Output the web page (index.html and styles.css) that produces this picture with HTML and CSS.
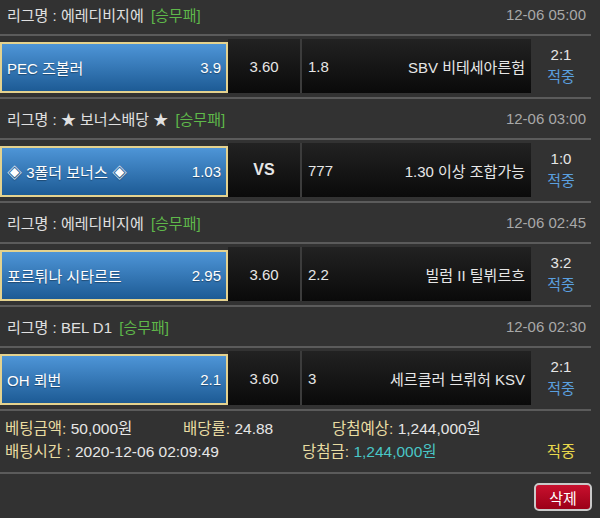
FILE: index.html
```html
<!DOCTYPE html>
<html lang="ko">
<head>
  <meta charset="UTF-8">
  <meta name="viewport" content="width=device-width, initial-scale=1.0">
  <title>배팅내역</title>
  <link rel="stylesheet" href="styles.css">
</head>
<body>

<div class="wrap">

  <!-- 경기 1 -->
  <div class="match">
    <div class="league">
      <span>리그명 : 에레디비지에 <em class="type">[승무패]</em></span>
      <span class="time">12-06 05:00</span>
    </div>
    <div class="game">
      <div class="pick"><span>PEC 즈볼러</span><span>3.9</span></div>
      <div class="draw">3.60</div>
      <div class="away"><span>1.8</span><span>SBV 비테세아른험</span></div>
      <div class="result"><span>2:1</span><span class="hit">적중</span></div>
    </div>
  </div>

  <!-- 경기 2 -->
  <div class="match">
    <div class="league">
      <span>리그명 : ★ 보너스배당 ★ <em class="type">[승무패]</em></span>
      <span class="time">12-06 03:00</span>
    </div>
    <div class="game">
      <div class="pick"><span>◈ 3폴더 보너스 ◈</span><span>1.03</span></div>
      <div class="draw vs">VS</div>
      <div class="away"><span>777</span><span>1.30 이상 조합가능</span></div>
      <div class="result"><span>1:0</span><span class="hit">적중</span></div>
    </div>
  </div>

  <!-- 경기 3 -->
  <div class="match">
    <div class="league">
      <span>리그명 : 에레디비지에 <em class="type">[승무패]</em></span>
      <span class="time">12-06 02:45</span>
    </div>
    <div class="game">
      <div class="pick"><span>포르튀나 시타르트</span><span>2.95</span></div>
      <div class="draw">3.60</div>
      <div class="away"><span>2.2</span><span>빌럼 II 틸뷔르흐</span></div>
      <div class="result"><span>3:2</span><span class="hit">적중</span></div>
    </div>
  </div>

  <!-- 경기 4 -->
  <div class="match">
    <div class="league">
      <span>리그명 : BEL D1 <em class="type">[승무패]</em></span>
      <span class="time">12-06 02:30</span>
    </div>
    <div class="game">
      <div class="pick"><span>OH 뢰번</span><span>2.1</span></div>
      <div class="draw">3.60</div>
      <div class="away"><span>3</span><span>세르클러 브뤼허 KSV</span></div>
      <div class="result"><span>2:1</span><span class="hit">적중</span></div>
    </div>
  </div>

  <!-- 합계 -->
  <div class="summary">
    <div class="line first">
      <span><b>베팅금액:</b> 50,000원</span>
      <span><b>배당률:</b> 24.88</span>
      <span><b>당첨예상:</b> 1,244,000원</span>
    </div>
    <div class="line second">
      <span><b>배팅시간 :</b> 2020-12-06 02:09:49</span>
      <span><b>당첨금:</b> <i class="win">1,244,000원</i></span>
      <span class="status">적중</span>
    </div>
  </div>

  <div class="actions">
    <button class="btn-del">삭제</button>
  </div>

</div>

</body>
</html>
```

FILE: styles.css
```css
body {
  margin: 0;
  background-color: #323232;
  color: #e6e6e6;
  font-family: "Liberation Sans", "Noto Sans CJK KR", sans-serif;
  overflow: hidden;
}

.wrap {
  width: 600px;
  margin-top: -5px;
}

.match,
.summary {
  width: 591px;
}

.league {
  height: 39px;
  display: flex;
  align-items: center;
  justify-content: space-between;
  padding: 0 5px 0 7px;
  border-bottom: 2px solid #5b5b5b;
  font-size: 15px;
  color: #e0e0e0;
}

.type {
  font-style: normal;
  color: #5fb84a;
  margin-left: 3px;
}

.time {
  font-size: 15px;
  color: #a8a8a8;
}

.game {
  display: flex;
  padding: 3px 0 4px;
  border-bottom: 2px solid #5b5b5b;
  font-size: 15px;
}

.pick {
  box-sizing: border-box;
  width: 228px;
  height: 51px;
  margin-top: 3px;
  display: flex;
  align-items: center;
  justify-content: space-between;
  padding: 0 5px 0 5px;
  border: 2px solid #e4d28e;
  background: linear-gradient(#4e95d7, #1d5b95);
  color: #fff;
  text-shadow: 0 1px 1px rgba(0,0,0,0.35);
}

.draw,
.away {
  height: 54px;
  background: linear-gradient(#222, #0a0a0a);
  display: flex;
  align-items: center;
}

.draw {
  width: 72px;
  justify-content: center;
  border-right: 2px solid #3c3c3c;
}

.vs {
  font-weight: bold;
  font-size: 16px;
}

.away {
  width: 229px;
  justify-content: space-between;
  padding: 0 6px;
  box-sizing: border-box;
}

.result {
  width: 60px;
  display: flex;
  flex-direction: column;
  align-items: center;
  justify-content: center;
  line-height: 22px;
}

.hit {
  color: #5a9fdf;
}

.summary {
  padding: 4px 0 11px;
  border-bottom: 2px solid #5b5b5b;
  font-size: 15.5px;
}

.line {
  display: grid;
  height: 23px;
  align-items: center;
  padding-left: 5px;
}

.line.first {
  grid-template-columns: 178px 149px 1fr;
}

.line.second {
  grid-template-columns: 297px 1fr 60px;
}

.line b {
  font-weight: normal;
  color: #e9dca2;
}

.win {
  font-style: normal;
  color: #49c6c6;
}

.status {
  text-align: center;
  color: #e8d84c;
}

.actions {
  display: flex;
  justify-content: flex-end;
  padding: 9px 8px 0;
}

.btn-del {
  width: 58px;
  height: 28px;
  border: 2px solid #c9c9c9;
  border-radius: 5px;
  background: linear-gradient(#c8102e, #9c0018);
  color: #fff;
  font-family: "Liberation Sans", "Noto Sans CJK KR", sans-serif;
  font-size: 15px;
  cursor: pointer;
}
```
